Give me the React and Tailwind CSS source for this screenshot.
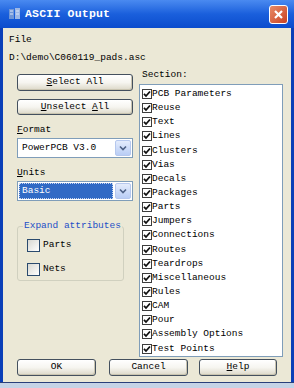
import React from "react";

const mono = { fontFamily: '"Liberation Mono", "DejaVu Sans Mono", monospace' };

const sections = [
  "PCB Parameters", "Reuse", "Text", "Lines", "Clusters", "Vias", "Decals",
  "Packages", "Parts", "Jumpers", "Connections", "Routes", "Teardrops",
  "Miscellaneous", "Rules", "CAM", "Pour", "Assembly Options", "Test Points",
];

function Btn({ children, className = "" }) {
  return (
    <div
      className={
        "flex items-center justify-center rounded-[3px] border border-[#44505e] bg-gradient-to-b from-white via-[#f6f5f0] to-[#dcd8c8] text-[9.5px] text-black shadow-[inset_-1px_-1px_0_#c9c4b0] " +
        className
      }
    >
      {children}
    </div>
  );
}

function Arrow() {
  return (
    <div className="flex w-[16px] items-center justify-center self-stretch rounded-[2px] border border-[#b6c8ee] bg-gradient-to-b from-[#e4ecfc] to-[#b9cdf5]">
      <svg width="8" height="6" viewBox="0 0 8 6">
        <path d="M1 1.5 L4 4.5 L7 1.5" fill="none" stroke="#4d6185" strokeWidth="1.6" />
      </svg>
    </div>
  );
}

function ListCheck() {
  return (
    <div className="flex h-[10px] w-[10px] shrink-0 items-center justify-center border border-[#3d3d3d] bg-white">
      <svg width="8" height="8" viewBox="0 0 8 8">
        <path d="M1 3.8 L3 6 L7 1.5" fill="none" stroke="#111" strokeWidth="1.8" />
      </svg>
    </div>
  );
}

function XpCheck() {
  return (
    <div className="h-[13px] w-[13px] shrink-0 border border-[#2a4a6e] bg-gradient-to-br from-[#d8d8d2] to-white" />
  );
}

export default function App() {
  return (
    <div className="flex h-[388px] w-[294px] flex-col bg-[#0a3fb8]" style={mono}>
      {/* title bar */}
      <div className="flex h-[28px] shrink-0 items-center bg-gradient-to-b from-[#4a8af0] via-[#1a5fdc] to-[#0b4ccd] pl-[8px] pr-[6px]">
        <svg width="13" height="14" viewBox="0 0 13 14" className="mr-[4px]">
          <rect x="1" y="2" width="5" height="10" fill="#6f96d8" />
          <rect x="7" y="1" width="5" height="11" fill="#9db8e6" />
          <path d="M2 4h3M2 7h3M8 4h3M8 7h3" stroke="#dbe6fa" strokeWidth="1" />
        </svg>
        <span className="text-[11.5px] font-bold tracking-[0.2px] text-white">ASCII Output</span>
        <div className="ml-auto flex h-[19px] w-[19px] items-center justify-center rounded-[3px] border border-white bg-gradient-to-br from-[#e88a66] to-[#c9401f]">
          <svg width="11" height="11" viewBox="0 0 11 11">
            <path d="M2 2 L9 9 M9 2 L2 9" stroke="white" strokeWidth="2.2" />
          </svg>
        </div>
      </div>

      {/* body */}
      <div className="ml-[3px] mr-[3px] flex h-[354px] flex-col bg-[#ebe8d6] text-[9.5px] text-black">
        <div className="ml-[6px] mt-[6px] h-[12px] leading-[12px]">File</div>
        <div className="ml-[6px] mt-[6px] h-[12px] leading-[12px]">D:\demo\C060119_pads.asc</div>

        <div className="mt-[4px] flex">
          {/* left column */}
          <div className="ml-[14px] flex w-[116px] flex-col">
            <Btn className="mt-[6px] h-[17px]">
              <span><span className="underline">S</span>elect All</span>
            </Btn>
            <Btn className="mt-[8px] h-[16px]">
              <span><span className="underline">U</span>nselect <span className="underline">A</span>ll</span>
            </Btn>
            <div className="mt-[9px] h-[12px] leading-[12px]">
              <span className="underline">F</span>ormat
            </div>
            <div className="mt-[2px] flex h-[20px] items-center border border-[#7f9db9] bg-white p-[1px]">
              <span className="flex-1 pl-[3px]">PowerPCB V3.0</span>
              <Arrow />
            </div>
            <div className="mt-[9px] h-[12px] leading-[12px]">
              <span className="underline">U</span>nits
            </div>
            <div className="mt-[2px] flex h-[20px] items-center border border-[#7f9db9] bg-white p-[1px]">
              <span className="mr-[2px] flex h-full flex-1 items-center border border-dotted border-[#c8d6f0] bg-[#316ac5] pl-[2px] text-white">
                Basic
              </span>
              <Arrow />
            </div>

            {/* group */}
            <div className="relative mt-[25px] h-[55px] w-[107px] rounded-[3px] border border-[#d0d0bf]">
              <span className="absolute left-[5px] top-[-7px] bg-[#ebe8d6] px-[1px] leading-[12px] text-[#1d4fc6]">
                Expand attributes
              </span>
              <div className="ml-[9px] mt-[11px] flex items-center gap-[3px]">
                <XpCheck />
                <span>Parts</span>
              </div>
              <div className="ml-[9px] mt-[10px] flex items-center gap-[3px]">
                <XpCheck />
                <span>Nets</span>
              </div>
            </div>
          </div>

          {/* right column */}
          <div className="ml-[6px] flex w-[144px] flex-col">
            <div className="h-[14px] pl-[3px] leading-[14px]">Section:</div>
            <div className="mt-[2px] flex h-[273px] flex-col border border-[#7f9db9] bg-white pt-[2px]">
              {sections.map((s) => (
                <div key={s} className="flex h-[14.15px] items-center pl-[2px]">
                  <ListCheck />
                  <span className="leading-[12px]">{s}</span>
                </div>
              ))}
            </div>
          </div>
        </div>

        {/* bottom buttons */}
        <div className="ml-[14px] mt-[2px] flex">
          <Btn className="h-[17px] w-[79px]">OK</Btn>
          <Btn className="ml-[13px] h-[17px] w-[79px]">Cancel</Btn>
          <Btn className="ml-[11px] h-[17px] w-[78px]">
            <span><span className="underline">H</span>elp</span>
          </Btn>
        </div>
      </div>
      <div className="flex-1 border-t border-[#2a3f7a] bg-[#c5d3e6]" />
    </div>
  );
}
